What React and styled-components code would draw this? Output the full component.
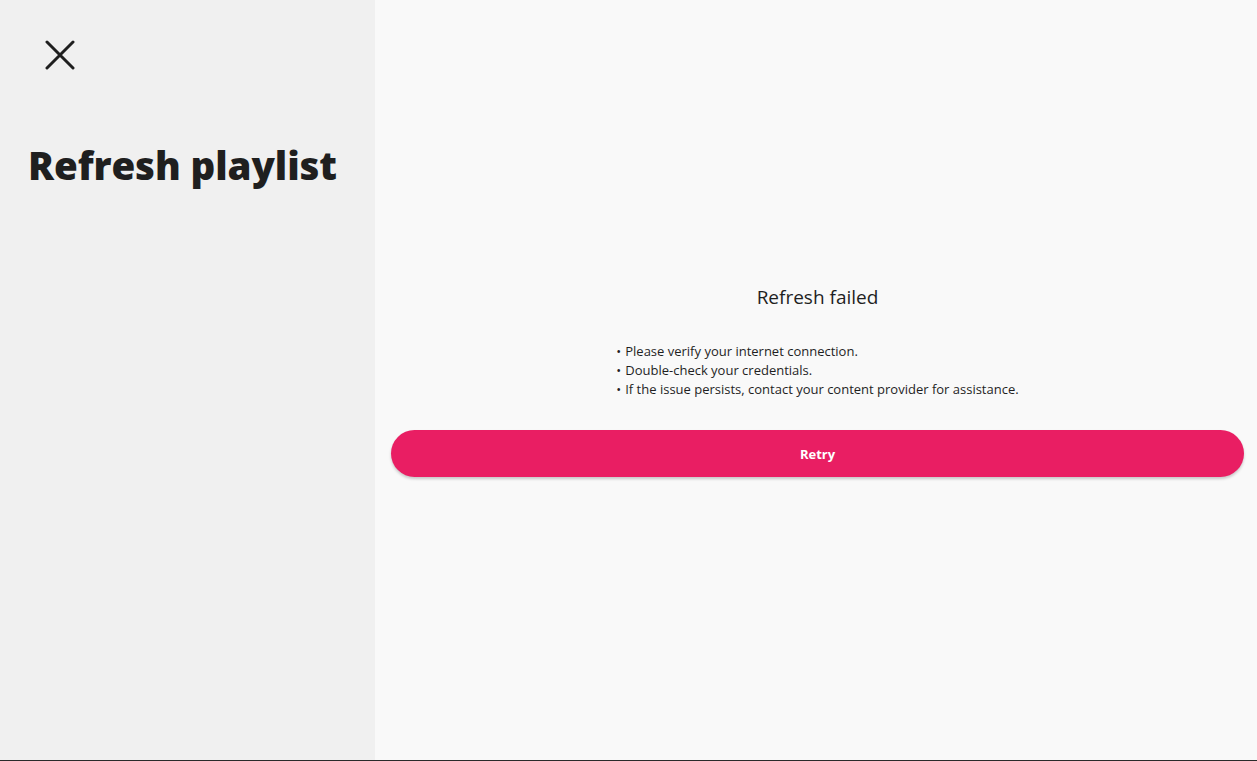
import React from "react";
import styled, { createGlobalStyle } from "styled-components";

const Global = createGlobalStyle`
  html, body { margin: 0; padding: 0; height: 100%; }
  body { font-family: "Open Sans", "Noto Sans", "Liberation Sans", sans-serif; color: #1f1f1f; }
  #root { height: 100%; }
`;

const Page = styled.div`
  display: flex;
  height: 761px;
  width: 1257px;
  overflow: hidden;
  box-sizing: border-box;
  border-bottom: 1px solid #2a2a2a;
`;

const Sidebar = styled.aside`
  width: 375px;
  flex: none;
  background: #f0f0f0;
  display: flex;
  flex-direction: column;
  padding: 40px 0 0 28px;
  box-sizing: border-box;
`;

const CloseButton = styled.button`
  width: 30px;
  height: 30px;
  margin-left: 17px;
  padding: 0;
  border: none;
  background: transparent;
  color: #1f1f1f;
  cursor: pointer;
  display: flex;
  align-items: center;
  justify-content: center;
`;

const Title = styled.h1`
  margin: 70px 0 0;
  font-family: "Open Sans", "Noto Sans", sans-serif;
  font-weight: 800;
  font-size: 38.5px;
  line-height: 50px;
  letter-spacing: -0.1px;
  color: #1f1f1f;
`;

const Main = styled.main`
  flex: 1;
  background: #f9f9f9;
  display: flex;
  flex-direction: column;
  align-items: stretch;
  padding: 283px 13px 0 16px;
  box-sizing: border-box;
`;

const Heading = styled.h2`
  margin: 0;
  text-align: center;
  font-weight: 400;
  font-size: 19px;
  line-height: 28px;
  color: #1f1f1f;
`;

const Tips = styled.ul`
  align-self: center;
  list-style: none;
  margin: 31px 0 0;
  padding: 0;
  font-size: 13px;
  line-height: 19px;
  color: #1f1f1f;
`;

const Tip = styled.li`
  &::before {
    content: "•";
    margin-right: 4px;
  }
`;

const RetryButton = styled.button`
  margin-top: 31px;
  height: 47px;
  border: none;
  border-radius: 24px;
  background: #e91e63;
  color: #ffffff;
  font-family: "Open Sans", "Noto Sans", sans-serif;
  font-weight: 700;
  font-size: 13px;
  box-shadow: 0 2px 3px rgba(0, 0, 0, 0.2);
  cursor: pointer;
`;

export default function App() {
  return (
    <>
      <Global />
      <Page>
        <Sidebar>
          <CloseButton aria-label="Close">
            <svg width="30" height="30" viewBox="0 0 30 30" fill="none">
              <path d="M2 2 L28 28 M28 2 L2 28" stroke="#1f1f1f" strokeWidth="3" strokeLinecap="round" />
            </svg>
          </CloseButton>
          <Title>Refresh playlist</Title>
        </Sidebar>
        <Main>
          <Heading>Refresh failed</Heading>
          <Tips>
            <Tip>Please verify your internet connection.</Tip>
            <Tip>Double-check your credentials.</Tip>
            <Tip>If the issue persists, contact your content provider for assistance.</Tip>
          </Tips>
          <RetryButton>Retry</RetryButton>
        </Main>
      </Page>
    </>
  );
}
